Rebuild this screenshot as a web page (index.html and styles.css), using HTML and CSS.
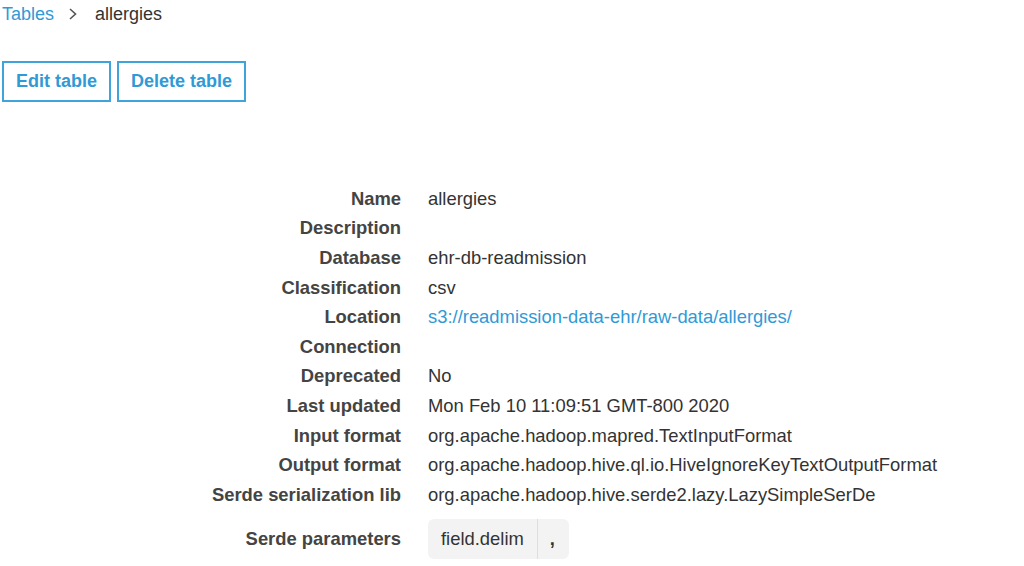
FILE: index.html
```html
<!DOCTYPE html>
<html>
<head>
<meta charset="utf-8">
<link rel="stylesheet" href="styles.css">
</head>
<body>
<nav class="crumbs">
  <a class="crumb-link" href="#">Tables</a>
  <svg class="chev" width="10" height="14" viewBox="0 0 10 14"><path d="M2 2 L7.5 7 L2 12" fill="none" stroke="#555" stroke-width="1.6"/></svg>
  <span class="crumb-current">allergies</span>
</nav>
<div class="actions">
  <button class="btn">Edit table</button>
  <button class="btn">Delete table</button>
</div>
<dl class="details">
  <dt>Name</dt><dd>allergies</dd>
  <dt>Description</dt><dd></dd>
  <dt>Database</dt><dd>ehr-db-readmission</dd>
  <dt>Classification</dt><dd>csv</dd>
  <dt>Location</dt><dd><a class="link" href="#">s3://readmission-data-ehr/raw-data/allergies/</a></dd>
  <dt>Connection</dt><dd></dd>
  <dt>Deprecated</dt><dd>No</dd>
  <dt>Last updated</dt><dd>Mon Feb 10 11:09:51 GMT-800 2020</dd>
  <dt>Input format</dt><dd>org.apache.hadoop.mapred.TextInputFormat</dd>
  <dt>Output format</dt><dd>org.apache.hadoop.hive.ql.io.HiveIgnoreKeyTextOutputFormat</dd>
  <dt>Serde serialization lib</dt><dd>org.apache.hadoop.hive.serde2.lazy.LazySimpleSerDe</dd>
  <dt class="param-label">Serde parameters</dt>
  <dd class="param-val"><span class="chip"><span class="chip-key">field.delim</span><span class="chip-val">,</span></span></dd>
</dl>
</body>
</html>
```
FILE: styles.css
```css
html, body {
  margin: 0;
  padding: 0;
  background: #fff;
}
body {
  font-family: "Liberation Sans", Arial, sans-serif;
  font-size: 18.4px;
  color: #333;
  min-height: 566px;
}
.crumbs {
  display: flex;
  align-items: center;
  height: 28px;
  padding-left: 2px;
  font-size: 18px;
}
.crumb-link {
  color: #2f9ad6;
  text-decoration: none;
}
.chev {
  margin-left: 14px;
  margin-right: 17px;
}
.crumb-current {
  color: #333;
}
.actions {
  display: flex;
  gap: 6px;
  margin-top: 33px;
  padding-left: 2px;
}
.btn {
  height: 41px;
  border: 2px solid #3fa3dc;
  background: #fff;
  color: #2f9ad6;
  font-family: "Liberation Sans", Arial, sans-serif;
  font-weight: bold;
  font-size: 18px;
  padding: 0 12px;
  margin: 0;
}
.details {
  display: grid;
  grid-template-columns: 401px auto;
  grid-template-rows: repeat(11, 29.6px) 58px;
  column-gap: 27px;
  align-items: center;
  margin: 82px 0 0 0;
}
.details dt {
  text-align: right;
  font-weight: bold;
  color: #444;
  margin: 0;
}
.details dd {
  margin: 0;
  color: #333;
}
.link {
  color: #2f9ad6;
  text-decoration: none;
}
.details .param-label, .details .param-val {
  margin-top: 9px;
  align-self: start;
  height: 40px;
  display: flex;
  align-items: center;
}
.details .param-label {
  justify-content: flex-end;
}
.chip {
  display: inline-flex;
  align-items: stretch;
  height: 40px;
  background: #f3f3f3;
  border-radius: 6px;
}
.chip-key {
  display: flex;
  align-items: center;
  padding: 0 13px 0 13px;
  border-right: 1px solid #dedede;
}
.chip-val {
  display: flex;
  align-items: center;
  padding: 0 14px 0 12px;
  font-weight: bold;
}
```
